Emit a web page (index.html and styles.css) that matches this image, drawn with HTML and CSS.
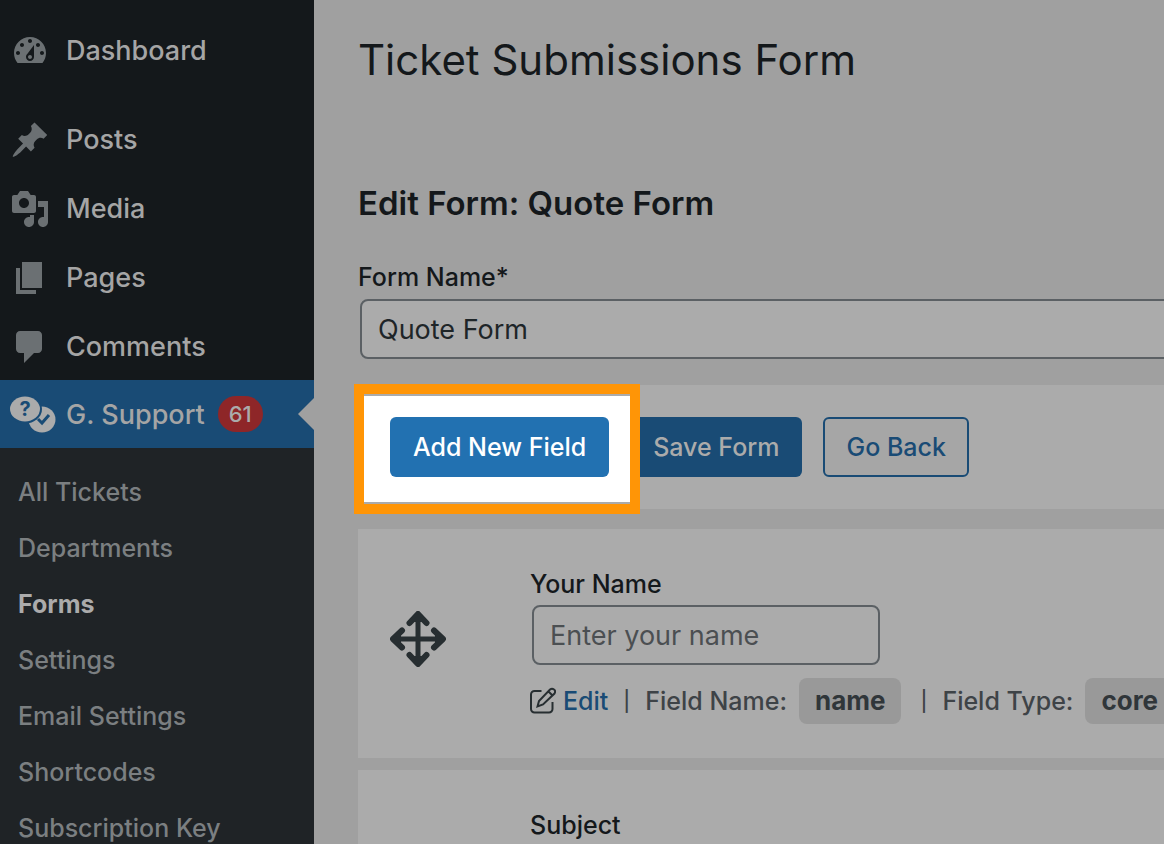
FILE: index.html
```html
<!DOCTYPE html>
<html lang="en">
<head>
  <meta charset="UTF-8" />
  <meta name="viewport" content="width=device-width, initial-scale=1.0" />
  <title>Ticket Submissions Form</title>
  <link rel="stylesheet" href="styles.css">
</head>
<body>
  <!-- Admin menu -->
  <nav class="sidebar">
    <ul class="menu">
      <li class="menu-first">
        <a class="menu-link" href="#">
          <svg class="menu-icon" viewBox="0 0 20 20"><path d="M3.76 16h12.48c1.1-1.37 1.76-3.11 1.76-5 0-4.42-3.58-8-8-8s-8 3.58-8 8c0 1.89.66 3.63 1.76 5zM10 4c.55 0 1 .45 1 1s-.45 1-1 1-1-.45-1-1 .45-1 1-1zM6 6c.55 0 1 .45 1 1s-.45 1-1 1-1-.45-1-1 .45-1 1-1zm8 0c.55 0 1 .45 1 1s-.45 1-1 1-1-.45-1-1 .45-1 1-1zm-5.37 5.55L12 7v6c0 1.1-.9 2-2 2s-2-.9-2-2c0-.57.24-1.08.63-1.45zM4 10c.55 0 1 .45 1 1s-.45 1-1 1-1-.45-1-1 .45-1 1-1zm12 0c.55 0 1 .45 1 1s-.45 1-1 1-1-.45-1-1 .45-1 1-1zm-5 3c0-.55-.45-1-1-1s-1 .45-1 1 .45 1 1 1 1-.45 1-1z"/></svg>
          Dashboard
        </a>
      </li>
      <li>
        <a class="menu-link" href="#">
          <svg class="menu-icon" viewBox="0 0 20 20"><path d="M10.44 3.02l1.82-1.82 6.36 6.35-1.83 1.82c-1.05-.68-2.48-.57-3.41.36l-.75.75c-.92.93-1.04 2.35-.35 3.41l-1.83 1.82-2.41-2.41-2.8 2.79c-.42.42-3.38 2.71-3.8 2.29s1.86-3.39 2.28-3.81l2.79-2.79L4.1 9.36l1.83-1.82c1.05.69 2.48.57 3.4-.36l.75-.75c.93-.92 1.05-2.35.36-3.41z"/></svg>
          Posts
        </a>
      </li>
      <li>
        <a class="menu-link" href="#">
          <svg class="menu-icon" viewBox="0 0 20 20"><path d="M13 11V4c0-.55-.45-1-1-1h-1.67L9 1H5L3.67 3H2c-.55 0-1 .45-1 1v7c0 .55.45 1 1 1h10c.55 0 1-.45 1-1zM7 4.5c1.38 0 2.5 1.12 2.5 2.5S8.38 9.5 7 9.5 4.5 8.38 4.5 7 5.62 4.5 7 4.5zM14 6h5v10.5c0 1.38-1.12 2.5-2.5 2.5S14 17.88 14 16.5s1.12-2.5 2.5-2.5c.17 0 .34.02.5.05V9h-3V6zm-4 8.05V13h2v3.5c0 1.38-1.12 2.5-2.5 2.5S7 17.88 7 16.5 8.12 14 9.5 14c.17 0 .34.02.5.05z"/></svg>
          Media
        </a>
      </li>
      <li>
        <a class="menu-link" href="#">
          <svg class="menu-icon" viewBox="0 0 20 20"><path d="M6 15V2h10v13H6zm-1 1h8v2H3V5h2v11z"/></svg>
          Pages
        </a>
      </li>
      <li>
        <a class="menu-link" href="#">
          <svg class="menu-icon" viewBox="0 0 20 20"><path d="M5 2h9c1.1 0 2 .9 2 2v7c0 1.1-.9 2-2 2h-2l-5 5v-5H5c-1.1 0-2-.9-2-2V4c0-1.1.9-2 2-2z"/></svg>
          Comments
        </a>
      </li>
      <li>
        <a class="menu-link current" href="#">
          <svg class="menu-icon support-icon" viewBox="0 0 46 40">
            <ellipse cx="32" cy="25.500" rx="13.500" ry="13"/>
            <ellipse class="icon-gap" cx="15" cy="15" rx="17" ry="14.500"/>
            <ellipse cx="15" cy="15" rx="15" ry="12.500"/>
            <path class="icon-check" d="M28 25l4 4 7-8"/>
            <text class="icon-mark" x="15" y="22">?</text>
          </svg>
          G. Support
          <span class="badge">61</span>
        </a>
      </li>
    </ul>
    <ul class="submenu">
      <li><a href="#">All Tickets</a></li>
      <li><a href="#">Departments</a></li>
      <li><a class="active" href="#">Forms</a></li>
      <li><a href="#">Settings</a></li>
      <li><a href="#">Email Settings</a></li>
      <li><a href="#">Shortcodes</a></li>
      <li><a href="#">Subscription Key</a></li>
    </ul>
  </nav>

  <!-- Form editor -->
  <main class="content">
    <h1>Ticket Submissions Form</h1>
    <h2>Edit Form: Quote Form</h2>

    <label class="form-label" for="formName">Form Name*</label>
    <input class="text-input form-name" type="text" id="formName" value="Quote Form" />

    <div class="card toolbar">
      <div class="spotlight">
        <button class="btn btn-bright" type="button">Add New Field</button>
      </div>
      <button class="btn btn-save" type="button">Save Form</button>
      <button class="btn btn-outline" type="button">Go Back</button>
    </div>

    <div class="card field">
      <svg class="move-icon" viewBox="0 0 56 56">
        <path d="M28 4v48M4 28h48"/>
        <path class="move-head" d="M19.500 12L28 3l8.500 9M19.500 44l8.500 9 8.500-9M12 19.500L3 28l9 8.500M44 19.500l9 8.500-9 8.500"/>
        <path class="move-tip" d="M28 3l6 8H22zM28 53l6-8H22zM3 28l8-6v12zM53 28l-8-6v12z"/>
      </svg>
      <div class="field-body">
        <label class="form-label" for="yourName">Your Name</label>
        <input class="text-input field-input" type="text" id="yourName" placeholder="Enter your name" />
        <div class="field-meta">
          <svg class="edit-icon" viewBox="0 0 26 28">
            <path d="M11.500 4H4.500a3.500 3.500 0 0 0-3.500 3.500v14.500a3.500 3.500 0 0 0 3.500 3.500h14.500a3.500 3.500 0 0 0 3.500-3.500v-7"/>
            <path d="M7.500 19.500l1.500-5.500L20 2.500q2-1.500 4 0t.5 4L13 17.500zM18.500 4.500l4 4"/>
          </svg>
          <a href="#">Edit</a>
          <span class="divider">|</span>
          <span>Field Name:</span>
          <strong class="chip">name</strong>
          <span class="divider">|</span>
          <span>Field Type:</span>
          <strong class="chip">core</strong>
        </div>
      </div>
    </div>

    <div class="card field">
      <div class="field-body field-body-plain">
        <label class="form-label" for="subject">Subject</label>
        <input class="text-input field-input" type="text" id="subject" />
      </div>
    </div>
  </main>
</body>
</html>
```
FILE: styles.css
```css
* {
  box-sizing: border-box;
}

body {
  display: flex;
  height: 100vh;
  margin: 0;
  overflow: hidden;
  background-color: #a0a0a0;
  color: #14181b;
  font-family: Inter, "Liberation Sans", sans-serif;
  font-size: 25px;
  font-weight: 500;
}

/* Admin menu */
.sidebar {
  flex: 0 0 314px;
  background-color: #1f2326;
}

.menu,
.submenu {
  margin: 0;
  padding: 0;
  list-style: none;
}

.menu {
  padding-top: 16px;
  background-color: #14181b;
}

.menu-first {
  margin-bottom: 20px;
}

.menu-link {
  display: flex;
  align-items: center;
  gap: 16px;
  height: 69px;
  padding-left: 10px;
  color: #a5a5a5;
  font-size: 27px;
  text-decoration: none;
}

.menu-icon {
  flex: none;
  width: 40px;
  height: 40px;
  fill: #6b7073;
}

.current {
  position: relative;
  gap: 10px;
  height: 68px;
  margin-top: -1px;
  background-color: #194b75;
}

.current::after {
  content: "";
  position: absolute;
  top: 18px;
  right: 0;
  border: 16px solid transparent;
  border-left-width: 0;
  border-right-color: #a0a0a0;
}

.support-icon {
  width: 46px;
  fill: #ababab;
}

.icon-gap {
  fill: #194b75;
}

.icon-check {
  fill: none;
  stroke: #194b75;
  stroke-width: 3;
}

.icon-mark {
  fill: #194b75;
  font-size: 20px;
  font-weight: 700;
  text-anchor: middle;
}

.badge {
  margin-left: 3px;
  padding: 0 11px;
  border-radius: 18px;
  background-color: #8e2628;
  color: #ababab;
  font-size: 22px;
  line-height: 36px;
}

.submenu {
  padding-top: 16px;
}

.submenu a {
  display: block;
  padding-left: 18px;
  color: #7b7f81;
  line-height: 56px;
  text-decoration: none;
}

.submenu .active {
  color: #ababab;
  font-weight: 700;
}

/* Form editor */
.content {
  flex: 1;
  min-width: 0;
  padding-left: 44px;
  overflow: hidden;
}

h1,
h2 {
  margin: 0;
  color: #14181b;
}

h1 {
  padding-top: 30px;
  font-size: 42px;
  font-weight: 400;
  line-height: 60px;
}

h2 {
  margin-top: 93px;
  font-size: 33px;
  font-weight: 600;
  line-height: 40px;
}

.form-label {
  display: block;
  line-height: 36px;
}

h2 + .form-label {
  margin-top: 36px;
}

.text-input {
  display: block;
  height: 60px;
  margin-left: 2px;
  padding: 0 16px;
  border: 2px solid #5b6064;
  border-radius: 8px;
  background-color: #ababab;
  color: #1e2528;
  font-family: inherit;
  font-size: 27px;
}

.text-input::placeholder {
  color: #4b4f52;
  opacity: 1;
}

.form-name {
  width: 110%;
  margin-top: 4px;
}

.card {
  background-color: #ababab;
}

.toolbar {
  display: flex;
  gap: 21px;
  margin: 26px 0 20px;
  padding: 32px;
}

.btn {
  position: relative;
  height: 60px;
  padding: 0 23px;
  border: 0;
  border-radius: 6px;
  font: inherit;
  white-space: nowrap;
}

.btn-bright {
  background-color: #2271b1;
  color: #fff;
}

.btn-save {
  background-color: #194b75;
  color: #ababab;
}

.btn-outline {
  padding: 0 21px;
  border: 2px solid #194b75;
  background-color: #a6a6a6;
  color: #194b75;
}

/* Highlight around the button, drawn over its neighbours */
.spotlight {
  position: relative;
  z-index: 1;
}

.spotlight::before {
  content: "";
  position: absolute;
  inset: -33px -31px -37px -36px;
  border: 10px solid #ff9506;
  background-color: #fff;
  box-shadow: inset 0 2px #ababab, inset 0 -2px #ababab;
}

.field {
  display: flex;
  align-items: flex-start;
  gap: 84px;
  margin-bottom: 12px;
  padding: 37px 0 34px 32px;
}

.move-icon {
  flex: none;
  width: 56px;
  height: 56px;
  margin-top: 45px;
  fill: none;
  stroke: #272e31;
  stroke-width: 5;
}

.move-head {
  stroke-width: 6;
  stroke-linecap: round;
  stroke-linejoin: round;
}

.move-tip {
  fill: #272e31;
  stroke: none;
}

.field-body-plain {
  padding-left: 140px;
}

.field-input {
  width: 348px;
  margin-top: 3px;
}

.field-meta {
  display: flex;
  align-items: center;
  gap: 12px;
  margin-top: 13px;
  color: #3e4347;
  line-height: 46px;
  white-space: nowrap;
}

.field-meta a {
  color: #194b75;
  text-decoration: none;
}

.edit-icon {
  width: 26px;
  height: 28px;
  margin-right: -5px;
  fill: none;
  stroke: #272e31;
  stroke-width: 2;
}

.divider {
  margin: 0 3px;
  font-size: 20px;
}

.chip {
  padding: 0 16px;
  border-radius: 8px;
  background-color: #999;
  color: #30363a;
  font-size: 26px;
  font-weight: 700;
}

.chip + .divider {
  margin-left: 7px;
}
```
